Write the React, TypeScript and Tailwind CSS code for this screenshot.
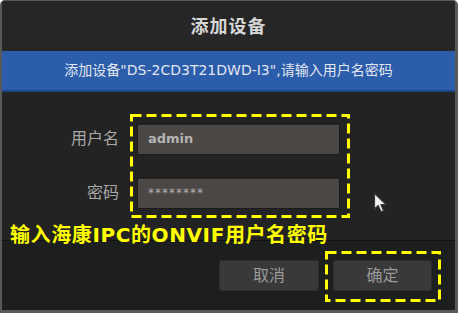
import React from 'react';

const font = { fontFamily: '"DejaVu Sans", "Noto Sans CJK SC", sans-serif' };

function DashedFrame({ w, h }: { w: number; h: number }) {
  return (
    <svg
      className="absolute inset-0 pointer-events-none"
      width={w}
      height={h}
      viewBox={`0 0 ${w} ${h}`}
    >
      <rect
        x={1.5}
        y={1.5}
        width={w - 3}
        height={h - 3}
        fill="none"
        stroke="#ffff00"
        strokeWidth={3}
        strokeDasharray="10 5"
      />
    </svg>
  );
}

function Field({ value, bold }: { value: string; bold?: boolean }) {
  return (
    <div className="h-[32px] w-[203px] flex items-center px-[10px] bg-[#4a4745] border border-[#1b1b1b] rounded-[2px] shadow-[inset_0_1px_0_#2a2a2a]">
      <span className={bold ? 'text-[13px] font-bold text-[#b4b4b4]' : 'text-[12px] tracking-[1px] text-[#b0b0b0]'}>
        {value}
      </span>
    </div>
  );
}

function Cursor() {
  return (
    <svg className="absolute left-[371px] top-[191px]" width="16" height="22" viewBox="0 0 16 22">
      <path
        d="M1.5 1.5 L1.5 17 L5.2 13.4 L8 19.8 L10.6 18.7 L7.9 12.5 L13 12.5 Z"
        fill="#f2f2f2"
        stroke="#3a3a3a"
        strokeWidth="1.2"
        strokeLinejoin="round"
      />
    </svg>
  );
}

export default function App() {
  return (
    <div
      style={font}
      className="relative w-[458px] h-[313px] flex flex-col bg-[#232323] border-t border-l-2 border-r-[3px] border-b-[3px] border-[#595959] rounded-t-[5px] overflow-hidden"
    >
      {/* Title */}
      <div className="h-[50px] flex items-center justify-center bg-[#262626]">
        <span className="text-[18px] font-bold text-[#d6d6d6] tracking-[1px]">添加设备</span>
      </div>

      {/* Info band */}
      <div className="h-[41px] flex items-center justify-center bg-[#2b5dab] border-b-2 border-[#1f4684]">
        <span className="text-[14px] text-[#e2e6ee]">添加设备"DS-2CD3T21DWD-I3",请输入用户名密码</span>
      </div>

      {/* Form */}
      <div className="flex-1 flex pt-[22px] bg-[#232323] border-b border-[#121212]">
        <div className="w-[117px] pt-[9px] flex flex-col gap-[22px] text-right">
          <div className="h-[32px] flex items-center justify-end text-[16px] text-[#a8a8a8]">用户名</div>
          <div className="h-[32px] flex items-center justify-end text-[16px] text-[#a8a8a8]">密码</div>
        </div>
        <div className="relative ml-[11px] w-[220px] h-[104px] pl-[7px] pt-[9px] flex flex-col gap-[22px]">
          <DashedFrame w={220} h={104} />
          <Field value="admin" bold />
          <Field value="********" />
        </div>
      </div>

      {/* Footer */}
      <div className="h-[69px] flex justify-end items-start pt-[10px] pr-[14px] bg-[#1d1f1e]">
        <button className="mt-[9px] mr-[6px] w-[100px] h-[31px] bg-[#393939] border border-[#2c2c2c] rounded-[2px] text-[16px] text-[#9a9a9a]">
          取消
        </button>
        <div className="relative w-[116px] h-[51px] pl-[8px] pt-[9px]">
          <DashedFrame w={116} h={51} />
          <button className="w-[99px] h-[31px] bg-[#393939] border border-[#2c2c2c] rounded-[2px] text-[16px] text-[#9a9a9a]">
            确定
          </button>
        </div>
      </div>

      {/* Annotation */}
      <div className="absolute left-[8px] top-[222px] text-[20px] leading-[24px] font-bold tracking-[0.6px] text-[#ffff00] whitespace-nowrap">
        输入海康IPC的ONVIF用户名密码
      </div>

      <Cursor />
    </div>
  );
}
